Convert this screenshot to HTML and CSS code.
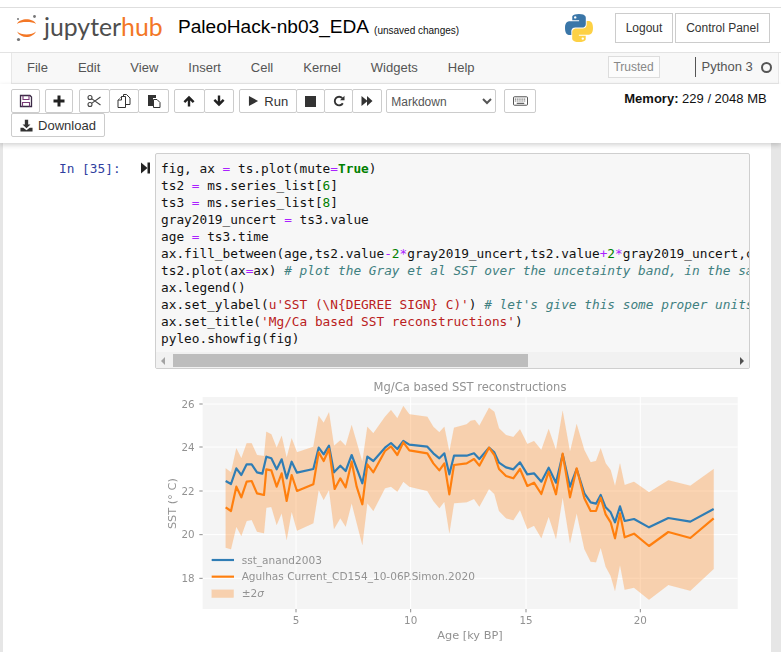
FILE: index.html
```html
<!DOCTYPE html>
<html lang="en">
<head>
<meta charset="utf-8">
<title>PaleoHack-nb03_EDA</title>
<link rel="stylesheet" href="styles.css">
</head>
<body>
<div class="top-gap"></div>
<header class="site-header">
  <div class="logo">
    <svg class="logo-mark" viewBox="0 0 24 30" width="24" height="30">
      <path class="arc" d="M2 11C5 4.800 18 4.800 21 11C17.500 8.400 5.500 8.400 2 11Z"/>
      <path class="arc" d="M2 18.500C5.500 25.800 17.500 25.800 21 18.500C17 22.400 6 22.400 2 18.500Z"/>
      <circle class="dot" cx="19.500" cy="3.500" r="1.400"/>
      <circle class="dot" cx="3" cy="6" r="1"/>
      <circle class="dot" cx="3.500" cy="26.500" r="1.600"/>
    </svg>
    <span class="logo-text"><span class="logo-jupyter">jupyter</span><span class="logo-hub">hub</span></span>
  </div>
  <span class="nb-title">PaleoHack-nb03_EDA</span>
  <span class="nb-status">(unsaved changes)</span>
  <svg class="python-logo" viewBox="0 0 110 110" width="28" height="28">
    <path fill="#3a76a8" d="M54.900 0C26.800 0 28.600 12.200 28.600 12.200v12.600h26.800v3.800H17.900S0 26.600 0 54.900s15.600 27.300 15.600 27.300h9.300V69s-.5-15.600 15.400-15.600h26.500s14.900.2 14.900-14.400V14.900S84 0 54.900 0zM40.200 8.500a4.800 4.800 0 1 1 0 9.600 4.800 4.800 0 0 1 0-9.600z"/>
    <path fill="#fdd145" d="M55.100 110c28.100 0 26.300-12.200 26.300-12.200V85.200H54.600v-3.800h37.500S110 83.400 110 55.100 94.400 27.800 94.400 27.800h-9.300V41s.5 15.600-15.400 15.600H43.200s-14.900-.2-14.900 14.400v24.100S26 110 55.100 110zm14.700-8.500a4.800 4.800 0 1 1 0-9.600 4.800 4.800 0 0 1 0 9.600z"/>
  </svg>
  <a class="head-btn head-btn-logout">Logout</a>
  <a class="head-btn head-btn-panel">Control Panel</a>
</header>

<nav class="menubar">
  <span class="menu-item">File</span>
  <span class="menu-item">Edit</span>
  <span class="menu-item">View</span>
  <span class="menu-item">Insert</span>
  <span class="menu-item">Cell</span>
  <span class="menu-item">Kernel</span>
  <span class="menu-item">Widgets</span>
  <span class="menu-item">Help</span>
  <span class="trusted">Trusted</span>
  <span class="kernel-name">Python 3</span>
  <span class="kernel-state"></span>
</nav>

<div class="toolbar">
  <div class="btn-group">
    <button class="tb-btn tb-save"><svg viewBox="0 0 14 14" width="14" height="14"><path fill="none" stroke="#3b2a46" stroke-width="1.300" d="M1.500 1.500h9.500l1.500 1.500v9.500h-11z"/><path fill="none" stroke="#7a3a78" stroke-width="1.100" d="M4 1.500v4h6v-4M3.500 12.500v-4h7v4"/></svg></button>
  </div>
  <div class="btn-group btn-group-wide">
    <button class="tb-btn tb-plus"><svg viewBox="0 0 12 12" width="12" height="12"><path d="M4.500 .5h3v4h4v3h-4v4h-3v-4h-4v-3h4z" fill="#222"/></svg></button>
  </div>
  <div class="btn-group">
    <button class="tb-btn tb-w30"><svg viewBox="0 0 14 14" width="14" height="14"><g fill="none" stroke="#444" stroke-width="1.100"><circle cx="3" cy="3.500" r="2"/><circle cx="3" cy="10.500" r="2"/><path d="M4.600 4.600 13.500 11M4.600 9.400 13.500 3"/></g></svg></button>
    <button class="tb-btn tb-w30"><svg viewBox="0 0 14 14" width="14" height="14"><g fill="#fff" stroke="#333" stroke-width="1"><path d="M6.500 .5h3l3.500 3.500v6.500H6.500z"/><path d="M1 6l3.500-3.500H8.500v11H1z"/><path d="M4.500 2.500V6H1"/></g></svg></button>
    <button class="tb-btn tb-w30"><svg viewBox="0 0 14 14" width="14" height="14"><path fill="#333" d="M1 1h8v3H6v8H1z"/><path fill="#fff" stroke="#333" d="M6.500 5.500h3.500l3 3v5H6.500z"/></svg></button>
  </div>
  <div class="btn-group">
    <button class="tb-btn tb-w30"><svg viewBox="0 0 12 12" width="12" height="12"><path d="M6 .8 11.500 6.300 9.800 8 7.200 5.400V11.500H4.800V5.400L2.200 8 .5 6.300z" fill="#222"/></svg></button>
    <button class="tb-btn tb-w30"><svg viewBox="0 0 12 12" width="12" height="12"><path d="M6 11.200.5 5.700 2.200 4l2.600 2.600V.5h2.400v6.100L9.800 4l1.700 1.700z" fill="#222"/></svg></button>
  </div>
  <div class="btn-group">
    <button class="tb-btn tb-run"><svg viewBox="0 0 12 12" width="11" height="12"><path d="M1 .5 11 6 1 11.500z" fill="#333"/></svg><span>Run</span></button>
    <button class="tb-btn tb-w28"><svg viewBox="0 0 12 12" width="11" height="11"><rect width="12" height="12" fill="#333"/></svg></button>
    <button class="tb-btn tb-w28"><svg viewBox="0 0 12 12" width="12" height="12"><path fill="none" stroke="#333" stroke-width="1.900" d="M9.800 8.200A4.300 4.300 0 1 1 9.300 3.200"/><path fill="#333" d="M11.500 .8v4.500H7z"/></svg></button>
    <button class="tb-btn tb-w29"><svg viewBox="0 0 12 12" width="12" height="12"><path fill="#333" d="M.5 1 6 5.500V1l5.500 5L6 11V6.500L.5 11z"/></svg></button>
  </div>
  <select class="cell-type"><option>Markdown</option></select>
  <button class="tb-btn tb-keys"><svg viewBox="0 0 16 10" width="15" height="10"><rect x=".5" y=".5" width="15" height="9" rx="1" fill="#fff" stroke="#444"/><path stroke="#555" stroke-width="1.300" stroke-dasharray="1 1" d="M2 3h12M2 5h12"/><path stroke="#555" stroke-width="1.200" d="M4 7.500h8"/></svg></button>
  <div class="memory"><b>Memory:</b> 229 / 2048 MB</div>
  <button class="tb-btn tb-download"><svg viewBox="0 0 14 14" width="13" height="13"><path fill="#333" d="M5.200.8h3.600v5h2.500L7 10 2.700 5.800h2.500zM.5 9.500h3L7 12l3.500-2.500h3v4H.5z"/></svg><span>Download</span></button>
</div>

<main class="notebook-bg">
  <div class="notebook">
    <div class="cell">
      <div class="prompt">In&nbsp;[35]:</div>
      <svg class="run-mark" viewBox="0 0 9 12" width="9" height="12"><path d="M0 .5 6.500 6 0 11.500z" fill="#222"/><rect x="6.500" y=".5" width="2.500" height="11" fill="#222"/></svg>
      <div class="code-box">
<pre class="code">fig, ax <span class="o">=</span> ts.plot(mute<span class="o">=</span><span class="k">True</span>)
ts2 <span class="o">=</span> ms.series_list[<span class="n">6</span>]
ts3 <span class="o">=</span> ms.series_list[<span class="n">8</span>]
gray2019_uncert <span class="o">=</span> ts3.value
age <span class="o">=</span> ts3.time
ax.fill_between(age,ts2.value<span class="o">-</span><span class="n">2</span><span class="o">*</span>gray2019_uncert,ts2.value<span class="o">+</span><span class="n">2</span><span class="o">*</span>gray2019_uncert,color='C1',alpha=0.3)
ts2.plot(ax<span class="o">=</span>ax) <span class="c"># plot the Gray et al SST over the uncetainty band, in the same axes</span>
ax.legend()
ax.set_ylabel(<span class="s">u'SST (\N{DEGREE SIGN} C)'</span>) <span class="c"># let's give this some proper units</span>
ax.set_title(<span class="s">'Mg/Ca based SST reconstructions'</span>)
pyleo.showfig(fig)</pre>
        <div class="hscroll">
          <span class="arrow-left"></span>
          <span class="thumb"></span>
          <span class="arrow-right"></span>
        </div>
      </div>
    </div>
    <svg class="chart" viewBox="0 0 1770 831" width="590" height="277">
      <rect class="plot-bg" x="128" y="66" width="1605" height="636"/>
      <g class="grid">
        <path d="M128 87H1733M128 216H1733M128 348H1733M128 479H1733M128 610H1733"/>
        <path d="M408 66V702M752 66V702M1098 66V702M1441 66V702"/>
      </g>
      <g class="ticks">
        <path d="M118 87h10M118 216h10M118 348h10M118 479h10M118 610h10"/>
        <path d="M408 702v10M752 702v10M1098 702v10M1441 702v10"/>
      </g>
      <polygon class="band" points="197,280 213,292 229,220 244,250 260,205 275,205 291,240 312,243 319,170 334,178 350,218 365,182 380,248 395,190 411,232 460,215 476,122 491,143 507,112 522,212 541,196 557,212 575,150 607,260 622,155 640,175 675,125 693,105 712,130 730,93 748,118 802,125 820,155 838,172 853,155 868,230 882,158 920,148 932,137 945,135 958,152 987,98 1003,110 1017,160 1038,180 1060,186 1080,163 1102,207 1122,198 1144,225 1166,162 1188,225 1208,107 1230,230 1250,147 1273,225 1292,262 1308,258 1322,220 1337,265 1352,285 1365,333 1380,265 1394,330 1422,320 1467,352 1525,316 1591,332 1661,282 1661,582 1591,647 1525,630 1467,674 1422,638 1394,644 1380,570 1365,648 1352,603 1337,575 1322,518 1308,562 1292,560 1273,522 1250,415 1230,505 1208,367 1188,492 1166,425 1144,490 1122,452 1102,462 1080,405 1060,436 1038,430 1017,408 1003,357 987,342 958,395 942,372 920,382 882,385 868,475 853,380 838,400 820,378 802,348 748,335 730,320 712,350 693,335 675,340 640,408 622,385 607,510 575,385 557,455 541,430 522,462 507,345 491,375 476,345 460,445 411,467 395,410 380,495 365,415 350,450 334,396 319,398 312,475 291,470 275,435 260,438 244,483 229,455 213,523 197,518"/>
      <polyline class="line-blue" points="197,318 213,327 229,280 244,300 260,268 275,268 291,292 307,296 319,245 334,250 350,283 365,253 380,310 395,260 411,293 460,282 476,218 491,238 507,212 522,292 541,272 557,288 575,240 607,325 622,245 640,258 675,218 693,204 712,222 730,198 748,209 802,215 820,235 838,250 853,235 868,298 882,242 920,242 942,235 958,252 987,218 1003,232 1017,263 1038,277 1060,283 1080,262 1102,298 1122,295 1144,320 1166,278 1188,323 1208,238 1230,335 1250,282 1273,355 1292,382 1308,386 1322,360 1337,397 1352,412 1365,442 1380,394 1394,438 1422,432 1467,457 1525,429 1591,440 1661,402"/>
      <polyline class="line-orange" points="197,397 213,408 229,335 244,367 260,320 275,318 291,355 312,360 319,283 334,286 350,335 365,295 380,378 395,300 411,348 460,328 476,232 491,258 507,222 524,342 541,310 557,337 575,260 590,335 607,388 622,268 640,292 675,228 693,214 712,240 730,202 748,226 802,235 820,265 838,286 853,265 868,358 882,270 920,265 942,252 958,272 987,218 1003,240 1017,282 1038,303 1060,310 1080,282 1102,333 1122,323 1144,357 1166,290 1188,358 1208,236 1230,367 1250,280 1273,370 1292,408 1308,408 1322,368 1337,418 1352,442 1365,490 1380,415 1394,487 1422,476 1467,513 1525,471 1591,489 1661,430"/>
      <text class="chart-title" x="930" y="47">Mg/Ca based SST reconstructions</text>
      <g class="tick-labels-y">
        <text x="104" y="98">26</text>
        <text x="104" y="227">24</text>
        <text x="104" y="359">22</text>
        <text x="104" y="490">20</text>
        <text x="104" y="621">18</text>
      </g>
      <g class="tick-labels-x">
        <text x="408" y="747">5</text>
        <text x="752" y="747">10</text>
        <text x="1098" y="747">15</text>
        <text x="1441" y="747">20</text>
      </g>
      <text class="axis-label" x="930" y="791">Age [ky BP]</text>
      <text class="axis-label" transform="translate(49 386) rotate(-90)">SST (° C)</text>
      <path class="line-blue" d="M155 555h67"/>
      <path class="line-orange" d="M155 605h67"/>
      <rect class="band" x="155" y="644" width="66" height="24"/>
      <g class="legend-text">
        <text x="245" y="566">sst_anand2003</text>
        <text x="245" y="616">Agulhas Current_CD154_10-06P.Simon.2020</text>
        <text x="245" y="667">±2<tspan class="sigma">σ</tspan></text>
      </g>
    </svg>
  </div>
</main>
</body>
</html>
```
FILE: styles.css
```css
* { box-sizing: border-box; }
html, body { margin: 0; padding: 0; height: 652px; overflow: hidden; }
body { background: #fff; font-family: "Liberation Sans", Arial, sans-serif; color: #000; }

.top-gap { height: 7px; }

.site-header {
  height: 46px;
  display: flex;
  align-items: flex-start;
  padding-right: 11px;
  border-top: 1px solid #dedede;
  border-bottom: 1px solid #e3e3e3;
}
.logo { display: flex; align-items: flex-start; margin: 4px 0 0 15px; width: 163px; flex: none; }
.logo-mark { margin-top: 1px; flex: none; }
.arc { fill: #f37726; }
.dot { fill: #767677; }
.logo-text { font-family: Lato, sans-serif; font-size: 24.800px; line-height: 30px; margin-left: 5px; }
.logo-jupyter { color: #4e4e4e; }
.logo-hub { color: #f37726; }

.nb-title { font-size: 19.100px; line-height: 24px; margin: 7px 0 0 0; color: #000; white-space: nowrap; }
.nb-status { font-size: 10px; margin: 17px 0 0 5px; color: #111; white-space: nowrap; }
.python-logo { margin: 6px 0 0 auto; flex: none; }
.head-btn {
  height: 30px;
  margin: 5px 0 0 2px;
  border: 1px solid #ccc;
  font-size: 12px;
  line-height: 28px;
  text-align: center;
  color: #333;
}
.head-btn-logout { margin-left: 22px; width: 58px; }
.head-btn-panel { width: 95px; }

.menubar {
  height: 31px;
  margin: 0 2px 0 11px;
  display: flex;
  align-items: center;
  padding: 0 0 2px 15px;
  background: #f8f8f8;
  border: 1px solid #e7e7e7;
  border-top: 0;
  font-size: 13px;
  color: #555;
  white-space: nowrap;
}
.menu-item { margin-right: 30px; flex: none; }
.menu-item:nth-child(8) { margin-right: 0; }
.trusted {
  margin-left: 133px;
  width: 52px;
  height: 22px;
  border: 1px solid #ddd;
  font-size: 12px;
  line-height: 20px;
  text-align: center;
  color: #888;
  background: #fcfcfc;
  flex: none;
}
.kernel-name { margin-left: 35px; padding-left: 6px; border-left: 1px solid #555; line-height: 20px; font-size: 13px; flex: none; }
.kernel-state { width: 11px; height: 11px; margin-left: 8px; border: 2px solid #555; border-radius: 50%; flex: none; }

.toolbar {
  height: 59px;
  padding: 5px 0 0 11px;
  display: flex;
  flex-wrap: wrap;
  align-content: flex-start;
  box-shadow: 0 2px 5px rgba(0, 0, 0, .18);
  position: relative;
  z-index: 1;
  background: #fff;
}
.btn-group { display: flex; margin-right: 5px; }
.btn-group-wide { margin-right: 6px; }
.btn-group .tb-btn + .tb-btn { margin-left: -1px; }
.tb-btn {
  height: 24px;
  padding: 0;
  display: flex;
  align-items: center;
  justify-content: center;
  gap: 5px;
  border: 1px solid #ccc;
  border-radius: 2px;
  background: #fff;
  font: 13px "Liberation Sans", Arial, sans-serif;
  color: #333;
}
.tb-save { width: 29px; }
.tb-plus { width: 28px; margin-left: 0; }
.tb-w30 { width: 30.670px; }
.tb-w28 { width: 29px; }
.tb-w29 { width: 30px; }
.tb-run { width: 58px; }
.cell-type {
  width: 110px;
  height: 24px;
  border: 1px solid #ccc;
  border-radius: 2px;
  background: #fff;
  color: #555;
  font: 12px "Liberation Sans", Arial, sans-serif;
  padding-top: 2px;
  margin-left: -1px;
}
.tb-keys { width: 32px; margin-left: 8px; }
.memory { margin-left: 88px; width: 150px; font-size: 13px; line-height: 20px; color: #111; white-space: nowrap; }
.tb-download { width: 94px; height: 24px; flex: none; }

.notebook-bg { height: 510px; background: #e6e6e6; padding: 0 10px 0 3px; }
.notebook { height: 100%; background: #fff; padding: 10px 0 0 0; }
.cell { display: flex; align-items: flex-start; }
.prompt {
  width: 138px;
  padding: 7px 0 0 56px;
  font: 12.800px/17px "DejaVu Sans Mono", monospace;
  color: #303f9f;
  white-space: nowrap;
}
.run-mark { margin: 9px 5px 0 0; flex: none; }
.code-box {
  width: 595px;
  height: 216px;
  border: 1px solid #cfcfcf;
  border-radius: 2px;
  background: #f7f7f7;
  overflow: hidden;
}
.code {
  margin: 0;
  height: 198px;
  padding: 6px 0 0 5px;
  font: 12.790px/17px "DejaVu Sans Mono", monospace;
  color: #111;
  overflow: hidden;
  white-space: pre;
}
.o { color: #aa22ff; }
.k { color: #008000; font-weight: bold; }
.n { color: #008000; }
.s { color: #ba2121; }
.c { color: #408080; font-style: italic; }

.hscroll { height: 17px; background: #f1f1f1; display: flex; align-items: center; padding: 0 5px 0 5px; }
.arrow-left { width: 0; height: 0; border: 4px solid transparent; border-right: 4px solid #a3a3a3; border-left: 0; }
.thumb { width: 355px; height: 13px; margin-left: 8px; background: #bdbdbd; }
.arrow-right { width: 0; height: 0; margin-left: auto; border: 4px solid transparent; border-left: 4px solid #505050; border-right: 0; }

.chart { display: block; margin: 6px 0 0 157px; filter: blur(.45px); }
.plot-bg { fill: #f4f4f4; }
.grid path { fill: none; stroke: #fff; stroke-width: 3; }
.ticks path { fill: none; stroke: #777; stroke-width: 2.500; }
.band { fill: #ff7f0e; fill-opacity: .3; stroke: #ff7f0e; stroke-opacity: .1; }
.line-blue { fill: none; stroke: #2f7db5; stroke-width: 6.500; stroke-linejoin: round; }
.line-orange { fill: none; stroke: #ff7f0e; stroke-width: 6.500; stroke-linejoin: round; }
.chart text { font-family: "DejaVu Sans", sans-serif; fill: #929292; }
.chart-title { font-size: 34.600px; text-anchor: middle; }
.tick-labels-y text { font-size: 31px; text-anchor: end; }
.tick-labels-x text { font-size: 31px; text-anchor: middle; }
.axis-label { font-size: 34px; text-anchor: middle; }
.legend-text text { font-size: 31.700px; }
.sigma { font-style: italic; }
```
